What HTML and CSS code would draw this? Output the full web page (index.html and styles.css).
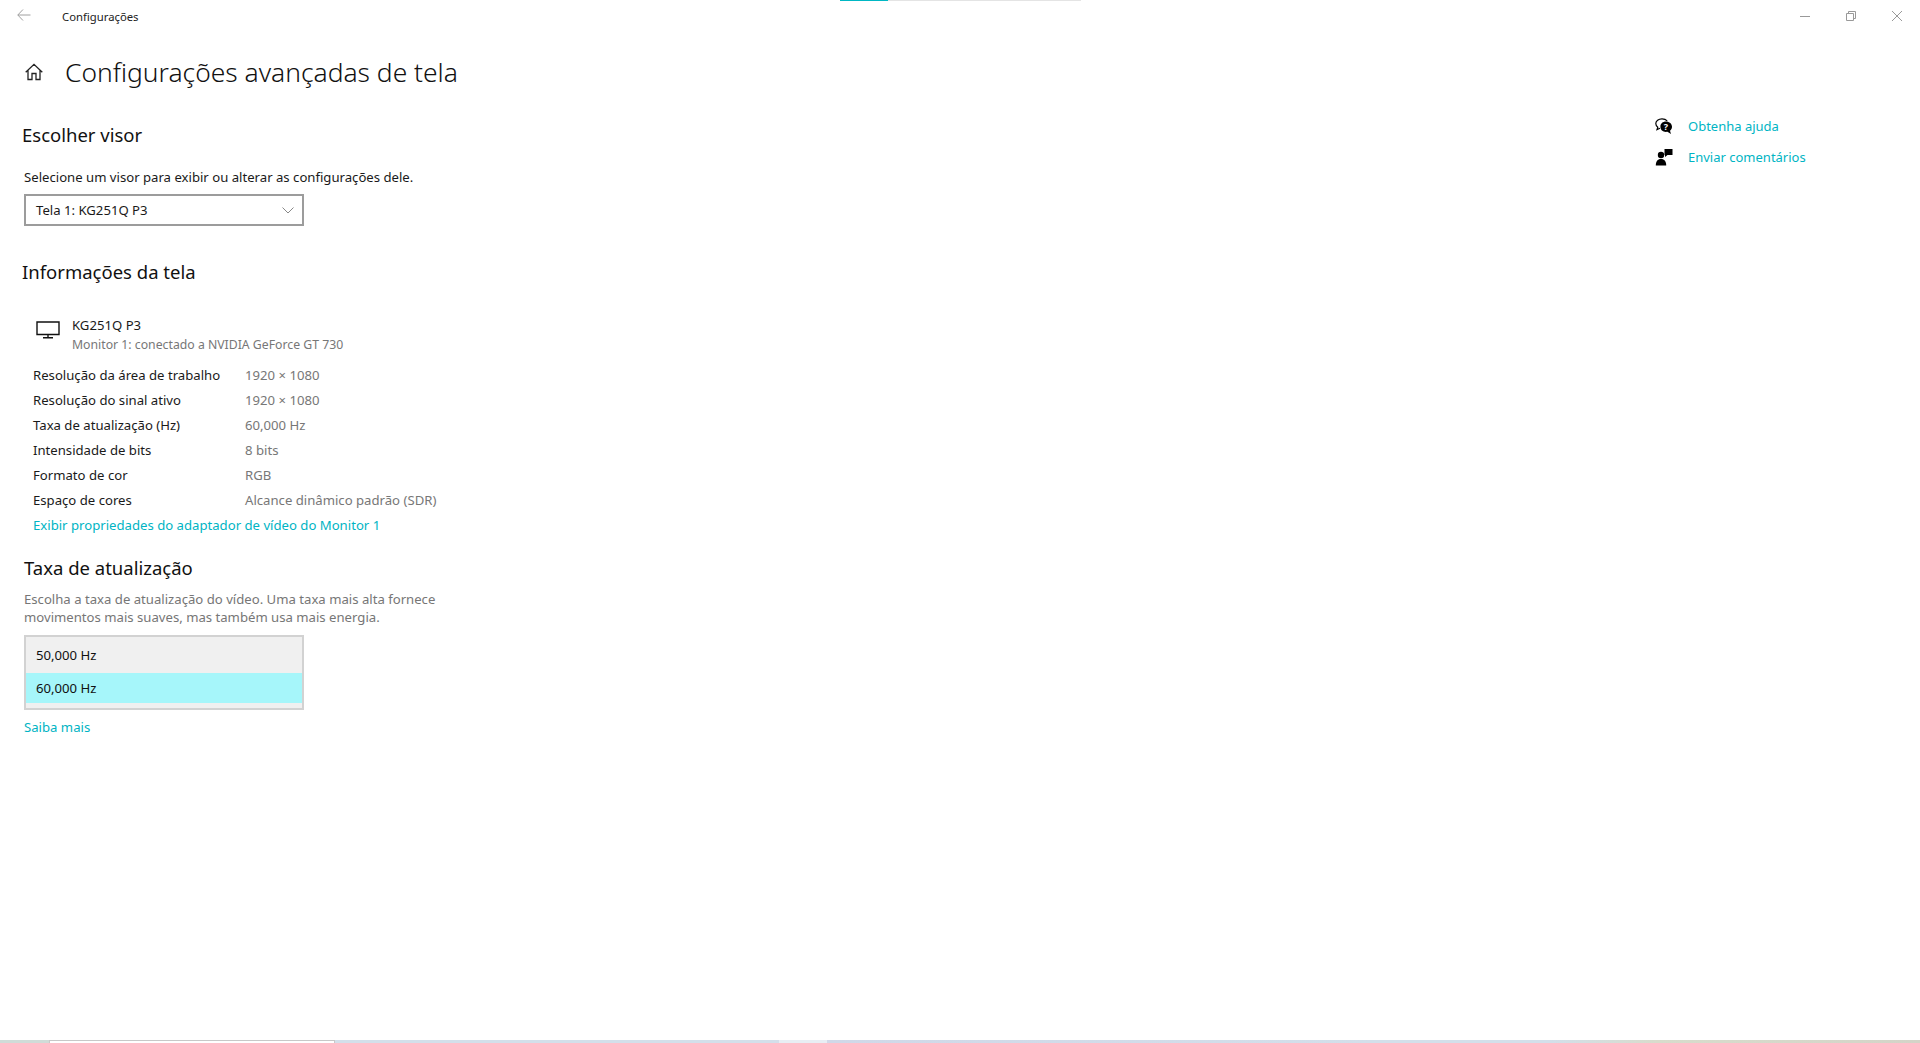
FILE: index.html
```html
<!DOCTYPE html>
<html lang="pt-BR">
<head>
    <meta charset="UTF-8">
    <meta name="viewport" content="width=device-width, initial-scale=1.0">
    <title>Configurações</title>
    <link rel="stylesheet" href="styles.css">
</head>
<body>
    <div class="progress"><div class="progress-fill"></div></div>

    <div class="window">
        <header class="titlebar">
            <div class="titlebar-left">
                <svg class="back-icon" width="14" height="12" viewBox="0 0 14 12"><path d="M6 .5.8 6 6 11.500M.8 6H13.500" fill="none" stroke="#a0a0a0"/></svg>
                <span class="app-name">Configurações</span>
            </div>
            <div class="window-controls">
                <svg width="12" height="12" viewBox="0 0 12 12"><path d="M1 6.500H11" stroke="#999"/></svg>
                <svg width="12" height="12" viewBox="0 0 12 12"><path d="M1.500 3.500H8.500V10.500H1.500ZM3.500 3.500V1.500H10.500V8.500H8.500" fill="none" stroke="#999"/></svg>
                <svg width="12" height="12" viewBox="0 0 12 12"><path d="M1 1 11 11M11 1 1 11" stroke="#999"/></svg>
            </div>
        </header>

        <div class="content">
            <main class="settings">
                <div class="page-head">
                    <svg class="home-icon" width="18" height="18" viewBox="0 0 18 18"><path d="M.7 9.300 9 1.300l8.300 8M3 7.500V16.500H7V10.500H11V16.500H15V7.500" fill="none" stroke="#222" stroke-width="1.300"/></svg>
                    <h1>Configurações avançadas de tela</h1>
                </div>

                <section class="display-pick">
                    <h2>Escolher visor</h2>
                    <p class="pick-label">Selecione um visor para exibir ou alterar as configurações dele.</p>
                    <div class="dropdown">
                        <span>Tela 1: KG251Q P3</span>
                        <svg width="12" height="7" viewBox="0 0 12 7"><path d="M.5.500 6 6 11.500.500" fill="none" stroke="#888"/></svg>
                    </div>
                </section>

                <section class="display-info">
                    <h2>Informações da tela</h2>
                    <div class="monitor">
                        <svg class="monitor-icon" width="24" height="18" viewBox="0 0 24 18"><path d="M1 1H23V13.500H1ZM12 13.500V16.500M7 16.700H17" fill="none" stroke="#111" stroke-width="1.400"/></svg>
                        <div>
                            <div class="monitor-name">KG251Q P3</div>
                            <div class="monitor-sub">Monitor 1: conectado a NVIDIA GeForce GT 730</div>
                        </div>
                    </div>
                    <div class="info-table">
                        <span>Resolução da área de trabalho</span><span class="val">1920 × 1080</span>
                        <span>Resolução do sinal ativo</span><span class="val">1920 × 1080</span>
                        <span>Taxa de atualização (Hz)</span><span class="val">60,000 Hz</span>
                        <span>Intensidade de bits</span><span class="val">8 bits</span>
                        <span>Formato de cor</span><span class="val">RGB</span>
                        <span>Espaço de cores</span><span class="val">Alcance dinâmico padrão (SDR)</span>
                    </div>
                    <a class="link adapter-link" href="#">Exibir propriedades do adaptador de vídeo do Monitor 1</a>
                </section>

                <section class="refresh">
                    <h2>Taxa de atualização</h2>
                    <p class="refresh-desc">Escolha a taxa de atualização do vídeo. Uma taxa mais alta fornece<br>movimentos mais suaves, mas também usa mais energia.</p>
                    <div class="listbox">
                        <div class="list-item">50,000 Hz</div>
                        <div class="list-item selected">60,000 Hz</div>
                    </div>
                    <a class="link more-link" href="#">Saiba mais</a>
                </section>
            </main>

            <aside class="help">
                <div class="help-row">
                    <svg width="18" height="17" viewBox="0 0 18 17">
                        <path d="M7 .8C3.500.8.800 2.900.800 5.600c0 1.500.8 2.800 2 3.700L2 11.600l3-1.300" fill="none" stroke="#000" stroke-width="1.200"/>
                        <path d="M7 .8c2.200 0 4 .8 5.200 2.100" fill="none" stroke="#000" stroke-width="1.200"/>
                        <path d="M11 3.500c3.400 0 6 2.300 6 5.200 0 1.600-.8 3-2 4l1 3.300-3.600-2.200c-.5.100-.9.100-1.400.100-3.300 0-5.600-2.200-5.600-5.200S7.700 3.500 11 3.500Z"/>
                        <text class="help-q" x="11" y="12">?</text>
                    </svg>
                    <a class="link" href="#">Obtenha ajuda</a>
                </div>
                <div class="help-row">
                    <svg width="18" height="17" viewBox="0 0 18 17">
                        <path d="M9.500 0H17.500V6H12.500L10 8V6H9.500Z"/>
                        <circle cx="6" cy="6" r="3.200"/>
                        <path d="M.8 16.500C.8 12.500 2.500 10 6 10s5.200 2.500 5.200 6.500Z"/>
                    </svg>
                    <a class="link" href="#">Enviar comentários</a>
                </div>
            </aside>
        </div>
    </div>

    <div class="taskbar-strip">
        <div class="strip-a"></div>
        <div class="strip-active"></div>
        <div class="strip-b"></div>
        <div class="strip-light"></div>
        <div class="strip-c"></div>
    </div>
</body>
</html>
```

FILE: styles.css
```css
* {
    box-sizing: border-box;
}
html, body {
    height: 100%;
}
body {
    margin: 0;
    display: flex;
    flex-direction: column;
    overflow: hidden;
    background: #ffffff;
    color: #1a1a1a;
    font-family: "Noto Sans", "Open Sans", sans-serif;
    font-size: 13.150px;
}
h1, h2, p {
    margin: 0;
    font-weight: 400;
}
.link {
    color: #00b4c4;
    text-decoration: none;
}

/* barra fina no topo */
.progress {
    position: absolute;
    top: 0;
    left: 840px;
    width: 241px;
    height: 1px;
    background: #e4e4e4;
}
.progress-fill {
    width: 48px;
    height: 1px;
    background: #00b7c3;
}

.window {
    flex: 1;
    min-height: 0;
    display: flex;
    flex-direction: column;
}
.titlebar {
    height: 32px;
    flex-shrink: 0;
    display: flex;
    justify-content: space-between;
    align-items: center;
}
.titlebar-left {
    display: flex;
    align-items: center;
    padding-left: 17px;
}
.back-icon {
    margin-top: -2px;
}
.app-name {
    margin-left: 31px;
    font-size: 11.300px;
    color: #222;
}
.window-controls {
    display: flex;
    gap: 34px;
    padding-right: 17px;
}

.content {
    flex: 1;
    display: flex;
    justify-content: space-between;
}
.settings {
    width: 500px;
    padding-left: 23px;
}
.page-head {
    display: flex;
    align-items: center;
    height: 40px;
    margin-top: 20px;
    padding-left: 2px;
}
.page-head h1 {
    margin-left: 22px;
    font-size: 26.400px;
    font-weight: 300;
    color: #111;
    white-space: nowrap;
}
h2 {
    font-size: 18.500px;
    line-height: 26px;
    color: #111;
}
.display-pick {
    margin-top: 30px;
}
.display-pick h2, .display-info h2 {
    margin-left: -1px;
}
.pick-label {
    margin: 19px 0 0 1px;
    line-height: 20px;
}
.dropdown {
    width: 280px;
    height: 32px;
    margin: 7px 0 0 1px;
    padding: 0 8px 0 10px;
    display: flex;
    align-items: center;
    justify-content: space-between;
    border: 2px solid #9c9c9c;
}

.display-info {
    margin-top: 33px;
}
.monitor {
    display: flex;
    margin: 31px 0 0 13px;
}
.monitor-icon {
    margin: 5px 12px 0 0;
}
.monitor-name {
    line-height: 19px;
}
.monitor-sub {
    font-size: 12.250px;
    line-height: 19px;
    color: #777;
}
.info-table {
    display: grid;
    grid-template-columns: 212px 1fr;
    grid-auto-rows: 25px;
    align-items: center;
    margin: 8px 0 0 10px;
}
.val {
    color: #777;
}
.adapter-link {
    display: block;
    margin: 1px 0 0 10px;
    line-height: 25px;
}

.refresh {
    margin: 17px 0 0 1px;
}
.refresh-desc {
    margin-top: 9px;
    line-height: 18px;
    color: #767676;
}
.listbox {
    width: 280px;
    height: 75px;
    margin-top: 9px;
    border: 2px solid #d2d2d2;
    background: #f0f0f0;
}
.list-item {
    height: 32px;
    margin-top: 2px;
    padding-left: 10px;
    display: flex;
    align-items: center;
    color: #111;
}
.list-item.selected {
    height: 30px;
    background: #a6f6fa;
}
.more-link {
    display: block;
    margin-top: 7px;
    line-height: 20px;
}

.help {
    width: 265px;
    padding-top: 78px;
    font-size: 13px;
}
.help-row {
    display: flex;
    align-items: center;
    height: 31px;
    gap: 15px;
}
.help-row svg {
    margin-top: 1px;
}
.help-q {
    fill: #ffffff;
    font-size: 9px;
    font-weight: 700;
    text-anchor: middle;
}

/* resto da barra de tarefas visivel embaixo */
.taskbar-strip {
    height: 3px;
    flex-shrink: 0;
    display: flex;
}
.strip-a {
    width: 49px;
    background: #d0dcd8;
}
.strip-active {
    width: 286px;
    background: #ffffff;
    border-top: 1px solid #c8c8c8;
    border-left: 1px solid #c8c8c8;
    border-right: 1px solid #c8c8c8;
}
.strip-b {
    width: 444px;
    background: #d3dfea;
}
.strip-light {
    width: 48px;
    background: #e8eef4;
}
.strip-c {
    flex: 1;
    background: linear-gradient(90deg, #d0d8e8 0%, #d3dfea 50%, #d3dfea 66%, #d8dccc 76%, #d4d4c8 100%);
}
```
